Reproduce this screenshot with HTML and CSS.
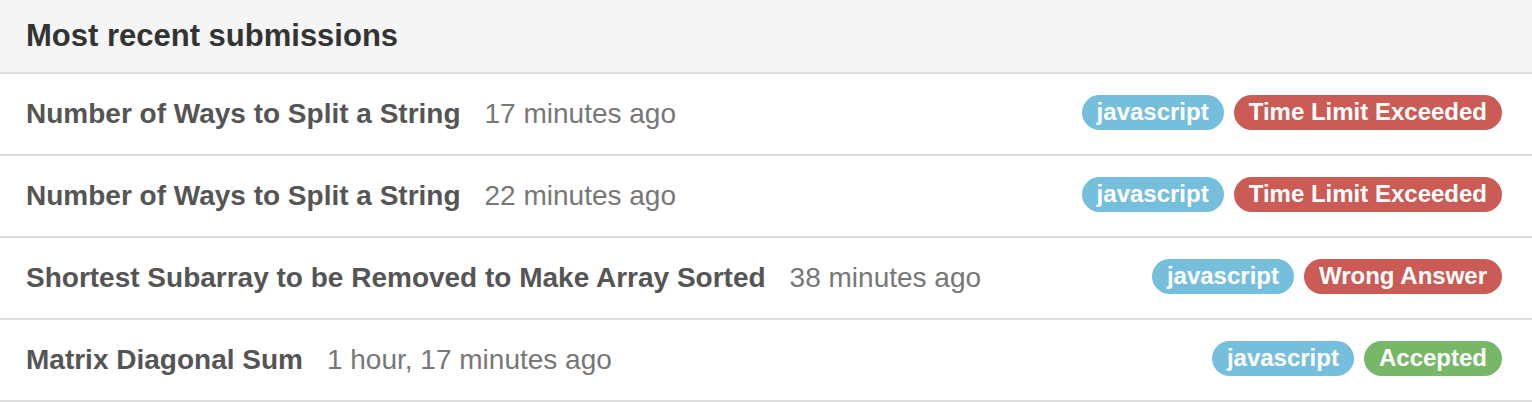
FILE: index.html
```html
<!DOCTYPE html>
<html>
<head>
<meta charset="utf-8">
<link rel="stylesheet" href="styles.css">
</head>
<body>
<div class="panel">
  <div class="panel-heading">Most recent submissions</div>
  <ul class="list">
    <li class="item">
      <span class="title">Number of Ways to Split a String</span>
      <span class="time">17 minutes ago</span>
      <span class="badges"><span class="badge info">javascript</span><span class="badge danger">Time Limit Exceeded</span></span>
    </li>
    <li class="item">
      <span class="title">Number of Ways to Split a String</span>
      <span class="time">22 minutes ago</span>
      <span class="badges"><span class="badge info">javascript</span><span class="badge danger">Time Limit Exceeded</span></span>
    </li>
    <li class="item">
      <span class="title">Shortest Subarray to be Removed to Make Array Sorted</span>
      <span class="time">38 minutes ago</span>
      <span class="badges"><span class="badge info">javascript</span><span class="badge danger">Wrong Answer</span></span>
    </li>
    <li class="item">
      <span class="title">Matrix Diagonal Sum</span>
      <span class="time">1 hour, 17 minutes ago</span>
      <span class="badges"><span class="badge info">javascript</span><span class="badge success">Accepted</span></span>
    </li>
  </ul>
</div>
</body>
</html>
```
FILE: styles.css
```css
html, body {
  margin: 0;
  padding: 0;
  background: #fff;
}
body {
  font-family: "Liberation Sans", Arial, sans-serif;
}
.panel {
  width: 1532px;
}
.panel-heading {
  box-sizing: border-box;
  height: 74px;
  background: #f5f5f5;
  border-bottom: 2px solid #dddddd;
  color: #333;
  font-size: 31px;
  font-weight: bold;
  padding: 0 26px;
  display: flex;
  align-items: center;
}
.list {
  list-style: none;
  margin: 0;
  padding: 0;
}
.item {
  height: 82px;
  box-sizing: border-box;
  border-bottom: 2px solid #dddddd;
  display: flex;
  align-items: center;
  padding: 0 30px 0 26px;
  font-size: 28px;
}
.title {
  font-weight: bold;
  color: #555;
}
.time {
  color: #777;
  margin-left: 24px;
}
.badges {
  margin-left: auto;
  display: flex;
  gap: 10px;
  margin-top: -4px;
}
.badge {
  display: inline-flex;
  align-items: center;
  height: 35px;
  padding: 0 15px;
  border-radius: 18px;
  color: #fff;
  font-size: 24px;
  font-weight: bold;
}
.info { background: #75bfdd; }
.danger { background: #cb5b55; }
.success { background: #77b767; }
```
